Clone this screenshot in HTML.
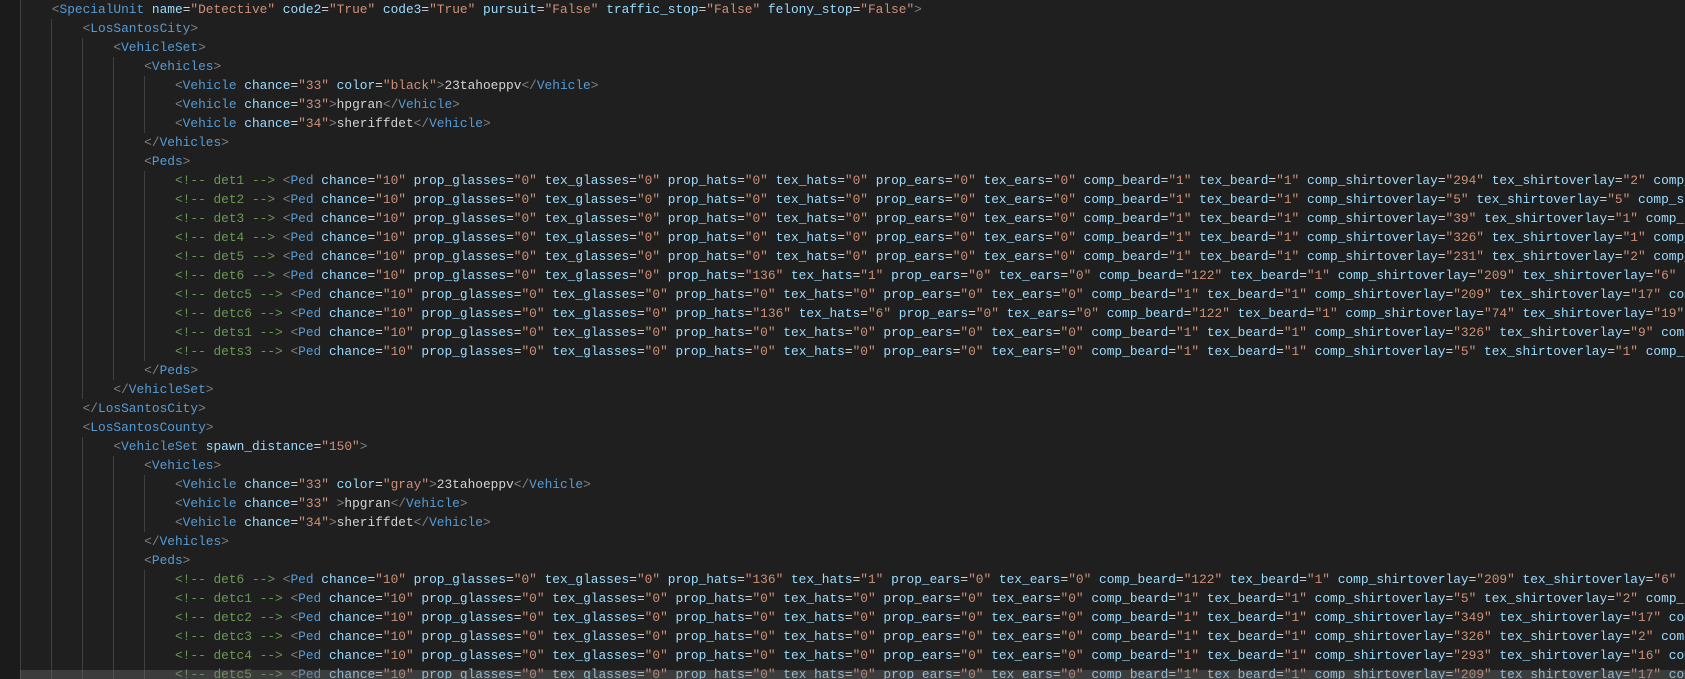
<!DOCTYPE html>
<html><head><meta charset="utf-8"><style>
html,body{margin:0;padding:0;background:#1f1f1f;width:1685px;height:679px;overflow:hidden;position:relative}
#gut{position:absolute;left:0;top:0;width:20px;height:679px;background:#1b1b1b}
pre{position:absolute;left:21px;top:0;width:1664px;height:679px;overflow:hidden;margin:0;font-family:"Liberation Mono",monospace;font-size:12.83px;line-height:19px;color:#d4d4d4;white-space:pre}
.b{color:#808080}.t{color:#569cd6}.a{color:#9cdcfe}.s{color:#ce9178}.c{color:#6a9955}
.g{position:absolute;width:1px;background:#404040}
#band{position:absolute;left:20px;top:670px;width:1665px;height:9px;background:rgba(121,121,121,0.32)}
</style></head><body>
<div id="gut"></div>
<div class="g" style="left:20px;top:0;height:679px"></div>
<div class="g" style="left:51px;top:19px;height:660px"></div>
<div class="g" style="left:82px;top:38px;height:361px"></div>
<div class="g" style="left:82px;top:437px;height:242px"></div>
<div class="g" style="left:113px;top:57px;height:323px"></div>
<div class="g" style="left:113px;top:456px;height:223px"></div>
<div class="g" style="left:144px;top:76px;height:57px"></div>
<div class="g" style="left:144px;top:171px;height:190px"></div>
<div class="g" style="left:144px;top:475px;height:57px"></div>
<div class="g" style="left:144px;top:570px;height:109px"></div>
<pre>    <span class="b">&lt;</span><span class="t">SpecialUnit</span> <span class="a">name</span>=<span class="s">"Detective"</span> <span class="a">code2</span>=<span class="s">"True"</span> <span class="a">code3</span>=<span class="s">"True"</span> <span class="a">pursuit</span>=<span class="s">"False"</span> <span class="a">traffic_stop</span>=<span class="s">"False"</span> <span class="a">felony_stop</span>=<span class="s">"False"</span><span class="b">&gt;</span>
        <span class="b">&lt;</span><span class="t">LosSantosCity</span><span class="b">&gt;</span>
            <span class="b">&lt;</span><span class="t">VehicleSet</span><span class="b">&gt;</span>
                <span class="b">&lt;</span><span class="t">Vehicles</span><span class="b">&gt;</span>
                    <span class="b">&lt;</span><span class="t">Vehicle</span> <span class="a">chance</span>=<span class="s">"33"</span> <span class="a">color</span>=<span class="s">"black"</span><span class="b">&gt;</span>23tahoeppv<span class="b">&lt;/</span><span class="t">Vehicle</span><span class="b">&gt;</span>
                    <span class="b">&lt;</span><span class="t">Vehicle</span> <span class="a">chance</span>=<span class="s">"33"</span><span class="b">&gt;</span>hpgran<span class="b">&lt;/</span><span class="t">Vehicle</span><span class="b">&gt;</span>
                    <span class="b">&lt;</span><span class="t">Vehicle</span> <span class="a">chance</span>=<span class="s">"34"</span><span class="b">&gt;</span>sheriffdet<span class="b">&lt;/</span><span class="t">Vehicle</span><span class="b">&gt;</span>
                <span class="b">&lt;/</span><span class="t">Vehicles</span><span class="b">&gt;</span>
                <span class="b">&lt;</span><span class="t">Peds</span><span class="b">&gt;</span>
                    <span class="c">&lt;!-- det1 --&gt;</span> <span class="b">&lt;</span><span class="t">Ped</span> <span class="a">chance</span>=<span class="s">"10"</span> <span class="a">prop_glasses</span>=<span class="s">"0"</span> <span class="a">tex_glasses</span>=<span class="s">"0"</span> <span class="a">prop_hats</span>=<span class="s">"0"</span> <span class="a">tex_hats</span>=<span class="s">"0"</span> <span class="a">prop_ears</span>=<span class="s">"0"</span> <span class="a">tex_ears</span>=<span class="s">"0"</span> <span class="a">comp_beard</span>=<span class="s">"1"</span> <span class="a">tex_beard</span>=<span class="s">"1"</span> <span class="a">comp_shirtoverlay</span>=<span class="s">"294"</span> <span class="a">tex_shirtoverlay</span>=<span class="s">"2"</span> <span class="a">comp_shirt</span>=<span class="s">"0"</span>
                    <span class="c">&lt;!-- det2 --&gt;</span> <span class="b">&lt;</span><span class="t">Ped</span> <span class="a">chance</span>=<span class="s">"10"</span> <span class="a">prop_glasses</span>=<span class="s">"0"</span> <span class="a">tex_glasses</span>=<span class="s">"0"</span> <span class="a">prop_hats</span>=<span class="s">"0"</span> <span class="a">tex_hats</span>=<span class="s">"0"</span> <span class="a">prop_ears</span>=<span class="s">"0"</span> <span class="a">tex_ears</span>=<span class="s">"0"</span> <span class="a">comp_beard</span>=<span class="s">"1"</span> <span class="a">tex_beard</span>=<span class="s">"1"</span> <span class="a">comp_shirtoverlay</span>=<span class="s">"5"</span> <span class="a">tex_shirtoverlay</span>=<span class="s">"5"</span> <span class="a">comp_shirt</span>=<span class="s">"0"</span>
                    <span class="c">&lt;!-- det3 --&gt;</span> <span class="b">&lt;</span><span class="t">Ped</span> <span class="a">chance</span>=<span class="s">"10"</span> <span class="a">prop_glasses</span>=<span class="s">"0"</span> <span class="a">tex_glasses</span>=<span class="s">"0"</span> <span class="a">prop_hats</span>=<span class="s">"0"</span> <span class="a">tex_hats</span>=<span class="s">"0"</span> <span class="a">prop_ears</span>=<span class="s">"0"</span> <span class="a">tex_ears</span>=<span class="s">"0"</span> <span class="a">comp_beard</span>=<span class="s">"1"</span> <span class="a">tex_beard</span>=<span class="s">"1"</span> <span class="a">comp_shirtoverlay</span>=<span class="s">"39"</span> <span class="a">tex_shirtoverlay</span>=<span class="s">"1"</span> <span class="a">comp_shirt</span>=<span class="s">"0"</span>
                    <span class="c">&lt;!-- det4 --&gt;</span> <span class="b">&lt;</span><span class="t">Ped</span> <span class="a">chance</span>=<span class="s">"10"</span> <span class="a">prop_glasses</span>=<span class="s">"0"</span> <span class="a">tex_glasses</span>=<span class="s">"0"</span> <span class="a">prop_hats</span>=<span class="s">"0"</span> <span class="a">tex_hats</span>=<span class="s">"0"</span> <span class="a">prop_ears</span>=<span class="s">"0"</span> <span class="a">tex_ears</span>=<span class="s">"0"</span> <span class="a">comp_beard</span>=<span class="s">"1"</span> <span class="a">tex_beard</span>=<span class="s">"1"</span> <span class="a">comp_shirtoverlay</span>=<span class="s">"326"</span> <span class="a">tex_shirtoverlay</span>=<span class="s">"1"</span> <span class="a">comp_shirt</span>=<span class="s">"0"</span>
                    <span class="c">&lt;!-- det5 --&gt;</span> <span class="b">&lt;</span><span class="t">Ped</span> <span class="a">chance</span>=<span class="s">"10"</span> <span class="a">prop_glasses</span>=<span class="s">"0"</span> <span class="a">tex_glasses</span>=<span class="s">"0"</span> <span class="a">prop_hats</span>=<span class="s">"0"</span> <span class="a">tex_hats</span>=<span class="s">"0"</span> <span class="a">prop_ears</span>=<span class="s">"0"</span> <span class="a">tex_ears</span>=<span class="s">"0"</span> <span class="a">comp_beard</span>=<span class="s">"1"</span> <span class="a">tex_beard</span>=<span class="s">"1"</span> <span class="a">comp_shirtoverlay</span>=<span class="s">"231"</span> <span class="a">tex_shirtoverlay</span>=<span class="s">"2"</span> <span class="a">comp_shirt</span>=<span class="s">"0"</span>
                    <span class="c">&lt;!-- det6 --&gt;</span> <span class="b">&lt;</span><span class="t">Ped</span> <span class="a">chance</span>=<span class="s">"10"</span> <span class="a">prop_glasses</span>=<span class="s">"0"</span> <span class="a">tex_glasses</span>=<span class="s">"0"</span> <span class="a">prop_hats</span>=<span class="s">"136"</span> <span class="a">tex_hats</span>=<span class="s">"1"</span> <span class="a">prop_ears</span>=<span class="s">"0"</span> <span class="a">tex_ears</span>=<span class="s">"0"</span> <span class="a">comp_beard</span>=<span class="s">"122"</span> <span class="a">tex_beard</span>=<span class="s">"1"</span> <span class="a">comp_shirtoverlay</span>=<span class="s">"209"</span> <span class="a">tex_shirtoverlay</span>=<span class="s">"6"</span> <span class="a">comp_shirt</span>=<span class="s">"0"</span>
                    <span class="c">&lt;!-- detc5 --&gt;</span> <span class="b">&lt;</span><span class="t">Ped</span> <span class="a">chance</span>=<span class="s">"10"</span> <span class="a">prop_glasses</span>=<span class="s">"0"</span> <span class="a">tex_glasses</span>=<span class="s">"0"</span> <span class="a">prop_hats</span>=<span class="s">"0"</span> <span class="a">tex_hats</span>=<span class="s">"0"</span> <span class="a">prop_ears</span>=<span class="s">"0"</span> <span class="a">tex_ears</span>=<span class="s">"0"</span> <span class="a">comp_beard</span>=<span class="s">"1"</span> <span class="a">tex_beard</span>=<span class="s">"1"</span> <span class="a">comp_shirtoverlay</span>=<span class="s">"209"</span> <span class="a">tex_shirtoverlay</span>=<span class="s">"17"</span> <span class="a">comp_shirt</span>=<span class="s">"0"</span>
                    <span class="c">&lt;!-- detc6 --&gt;</span> <span class="b">&lt;</span><span class="t">Ped</span> <span class="a">chance</span>=<span class="s">"10"</span> <span class="a">prop_glasses</span>=<span class="s">"0"</span> <span class="a">tex_glasses</span>=<span class="s">"0"</span> <span class="a">prop_hats</span>=<span class="s">"136"</span> <span class="a">tex_hats</span>=<span class="s">"6"</span> <span class="a">prop_ears</span>=<span class="s">"0"</span> <span class="a">tex_ears</span>=<span class="s">"0"</span> <span class="a">comp_beard</span>=<span class="s">"122"</span> <span class="a">tex_beard</span>=<span class="s">"1"</span> <span class="a">comp_shirtoverlay</span>=<span class="s">"74"</span> <span class="a">tex_shirtoverlay</span>=<span class="s">"19"</span> <span class="a">comp_shirt</span>=<span class="s">"0"</span>
                    <span class="c">&lt;!-- dets1 --&gt;</span> <span class="b">&lt;</span><span class="t">Ped</span> <span class="a">chance</span>=<span class="s">"10"</span> <span class="a">prop_glasses</span>=<span class="s">"0"</span> <span class="a">tex_glasses</span>=<span class="s">"0"</span> <span class="a">prop_hats</span>=<span class="s">"0"</span> <span class="a">tex_hats</span>=<span class="s">"0"</span> <span class="a">prop_ears</span>=<span class="s">"0"</span> <span class="a">tex_ears</span>=<span class="s">"0"</span> <span class="a">comp_beard</span>=<span class="s">"1"</span> <span class="a">tex_beard</span>=<span class="s">"1"</span> <span class="a">comp_shirtoverlay</span>=<span class="s">"326"</span> <span class="a">tex_shirtoverlay</span>=<span class="s">"9"</span> <span class="a">comp_shirt</span>=<span class="s">"0"</span>
                    <span class="c">&lt;!-- dets3 --&gt;</span> <span class="b">&lt;</span><span class="t">Ped</span> <span class="a">chance</span>=<span class="s">"10"</span> <span class="a">prop_glasses</span>=<span class="s">"0"</span> <span class="a">tex_glasses</span>=<span class="s">"0"</span> <span class="a">prop_hats</span>=<span class="s">"0"</span> <span class="a">tex_hats</span>=<span class="s">"0"</span> <span class="a">prop_ears</span>=<span class="s">"0"</span> <span class="a">tex_ears</span>=<span class="s">"0"</span> <span class="a">comp_beard</span>=<span class="s">"1"</span> <span class="a">tex_beard</span>=<span class="s">"1"</span> <span class="a">comp_shirtoverlay</span>=<span class="s">"5"</span> <span class="a">tex_shirtoverlay</span>=<span class="s">"1"</span> <span class="a">comp_shirt</span>=<span class="s">"0"</span>
                <span class="b">&lt;/</span><span class="t">Peds</span><span class="b">&gt;</span>
            <span class="b">&lt;/</span><span class="t">VehicleSet</span><span class="b">&gt;</span>
        <span class="b">&lt;/</span><span class="t">LosSantosCity</span><span class="b">&gt;</span>
        <span class="b">&lt;</span><span class="t">LosSantosCounty</span><span class="b">&gt;</span>
            <span class="b">&lt;</span><span class="t">VehicleSet</span> <span class="a">spawn_distance</span>=<span class="s">"150"</span><span class="b">&gt;</span>
                <span class="b">&lt;</span><span class="t">Vehicles</span><span class="b">&gt;</span>
                    <span class="b">&lt;</span><span class="t">Vehicle</span> <span class="a">chance</span>=<span class="s">"33"</span> <span class="a">color</span>=<span class="s">"gray"</span><span class="b">&gt;</span>23tahoeppv<span class="b">&lt;/</span><span class="t">Vehicle</span><span class="b">&gt;</span>
                    <span class="b">&lt;</span><span class="t">Vehicle</span> <span class="a">chance</span>=<span class="s">"33"</span> <span class="b">&gt;</span>hpgran<span class="b">&lt;/</span><span class="t">Vehicle</span><span class="b">&gt;</span>
                    <span class="b">&lt;</span><span class="t">Vehicle</span> <span class="a">chance</span>=<span class="s">"34"</span><span class="b">&gt;</span>sheriffdet<span class="b">&lt;/</span><span class="t">Vehicle</span><span class="b">&gt;</span>
                <span class="b">&lt;/</span><span class="t">Vehicles</span><span class="b">&gt;</span>
                <span class="b">&lt;</span><span class="t">Peds</span><span class="b">&gt;</span>
                    <span class="c">&lt;!-- det6 --&gt;</span> <span class="b">&lt;</span><span class="t">Ped</span> <span class="a">chance</span>=<span class="s">"10"</span> <span class="a">prop_glasses</span>=<span class="s">"0"</span> <span class="a">tex_glasses</span>=<span class="s">"0"</span> <span class="a">prop_hats</span>=<span class="s">"136"</span> <span class="a">tex_hats</span>=<span class="s">"1"</span> <span class="a">prop_ears</span>=<span class="s">"0"</span> <span class="a">tex_ears</span>=<span class="s">"0"</span> <span class="a">comp_beard</span>=<span class="s">"122"</span> <span class="a">tex_beard</span>=<span class="s">"1"</span> <span class="a">comp_shirtoverlay</span>=<span class="s">"209"</span> <span class="a">tex_shirtoverlay</span>=<span class="s">"6"</span> <span class="a">comp_shirt</span>=<span class="s">"0"</span>
                    <span class="c">&lt;!-- detc1 --&gt;</span> <span class="b">&lt;</span><span class="t">Ped</span> <span class="a">chance</span>=<span class="s">"10"</span> <span class="a">prop_glasses</span>=<span class="s">"0"</span> <span class="a">tex_glasses</span>=<span class="s">"0"</span> <span class="a">prop_hats</span>=<span class="s">"0"</span> <span class="a">tex_hats</span>=<span class="s">"0"</span> <span class="a">prop_ears</span>=<span class="s">"0"</span> <span class="a">tex_ears</span>=<span class="s">"0"</span> <span class="a">comp_beard</span>=<span class="s">"1"</span> <span class="a">tex_beard</span>=<span class="s">"1"</span> <span class="a">comp_shirtoverlay</span>=<span class="s">"5"</span> <span class="a">tex_shirtoverlay</span>=<span class="s">"2"</span> <span class="a">comp_shirt</span>=<span class="s">"0"</span>
                    <span class="c">&lt;!-- detc2 --&gt;</span> <span class="b">&lt;</span><span class="t">Ped</span> <span class="a">chance</span>=<span class="s">"10"</span> <span class="a">prop_glasses</span>=<span class="s">"0"</span> <span class="a">tex_glasses</span>=<span class="s">"0"</span> <span class="a">prop_hats</span>=<span class="s">"0"</span> <span class="a">tex_hats</span>=<span class="s">"0"</span> <span class="a">prop_ears</span>=<span class="s">"0"</span> <span class="a">tex_ears</span>=<span class="s">"0"</span> <span class="a">comp_beard</span>=<span class="s">"1"</span> <span class="a">tex_beard</span>=<span class="s">"1"</span> <span class="a">comp_shirtoverlay</span>=<span class="s">"349"</span> <span class="a">tex_shirtoverlay</span>=<span class="s">"17"</span> <span class="a">comp_shirt</span>=<span class="s">"0"</span>
                    <span class="c">&lt;!-- detc3 --&gt;</span> <span class="b">&lt;</span><span class="t">Ped</span> <span class="a">chance</span>=<span class="s">"10"</span> <span class="a">prop_glasses</span>=<span class="s">"0"</span> <span class="a">tex_glasses</span>=<span class="s">"0"</span> <span class="a">prop_hats</span>=<span class="s">"0"</span> <span class="a">tex_hats</span>=<span class="s">"0"</span> <span class="a">prop_ears</span>=<span class="s">"0"</span> <span class="a">tex_ears</span>=<span class="s">"0"</span> <span class="a">comp_beard</span>=<span class="s">"1"</span> <span class="a">tex_beard</span>=<span class="s">"1"</span> <span class="a">comp_shirtoverlay</span>=<span class="s">"326"</span> <span class="a">tex_shirtoverlay</span>=<span class="s">"2"</span> <span class="a">comp_shirt</span>=<span class="s">"0"</span>
                    <span class="c">&lt;!-- detc4 --&gt;</span> <span class="b">&lt;</span><span class="t">Ped</span> <span class="a">chance</span>=<span class="s">"10"</span> <span class="a">prop_glasses</span>=<span class="s">"0"</span> <span class="a">tex_glasses</span>=<span class="s">"0"</span> <span class="a">prop_hats</span>=<span class="s">"0"</span> <span class="a">tex_hats</span>=<span class="s">"0"</span> <span class="a">prop_ears</span>=<span class="s">"0"</span> <span class="a">tex_ears</span>=<span class="s">"0"</span> <span class="a">comp_beard</span>=<span class="s">"1"</span> <span class="a">tex_beard</span>=<span class="s">"1"</span> <span class="a">comp_shirtoverlay</span>=<span class="s">"293"</span> <span class="a">tex_shirtoverlay</span>=<span class="s">"16"</span> <span class="a">comp_shirt</span>=<span class="s">"0"</span>
                    <span class="c">&lt;!-- detc5 --&gt;</span> <span class="b">&lt;</span><span class="t">Ped</span> <span class="a">chance</span>=<span class="s">"10"</span> <span class="a">prop_glasses</span>=<span class="s">"0"</span> <span class="a">tex_glasses</span>=<span class="s">"0"</span> <span class="a">prop_hats</span>=<span class="s">"0"</span> <span class="a">tex_hats</span>=<span class="s">"0"</span> <span class="a">prop_ears</span>=<span class="s">"0"</span> <span class="a">tex_ears</span>=<span class="s">"0"</span> <span class="a">comp_beard</span>=<span class="s">"1"</span> <span class="a">tex_beard</span>=<span class="s">"1"</span> <span class="a">comp_shirtoverlay</span>=<span class="s">"209"</span> <span class="a">tex_shirtoverlay</span>=<span class="s">"17"</span> <span class="a">comp_shirt</span>=<span class="s">"0"</span>
</pre>
<div id="band"></div>
</body></html>
